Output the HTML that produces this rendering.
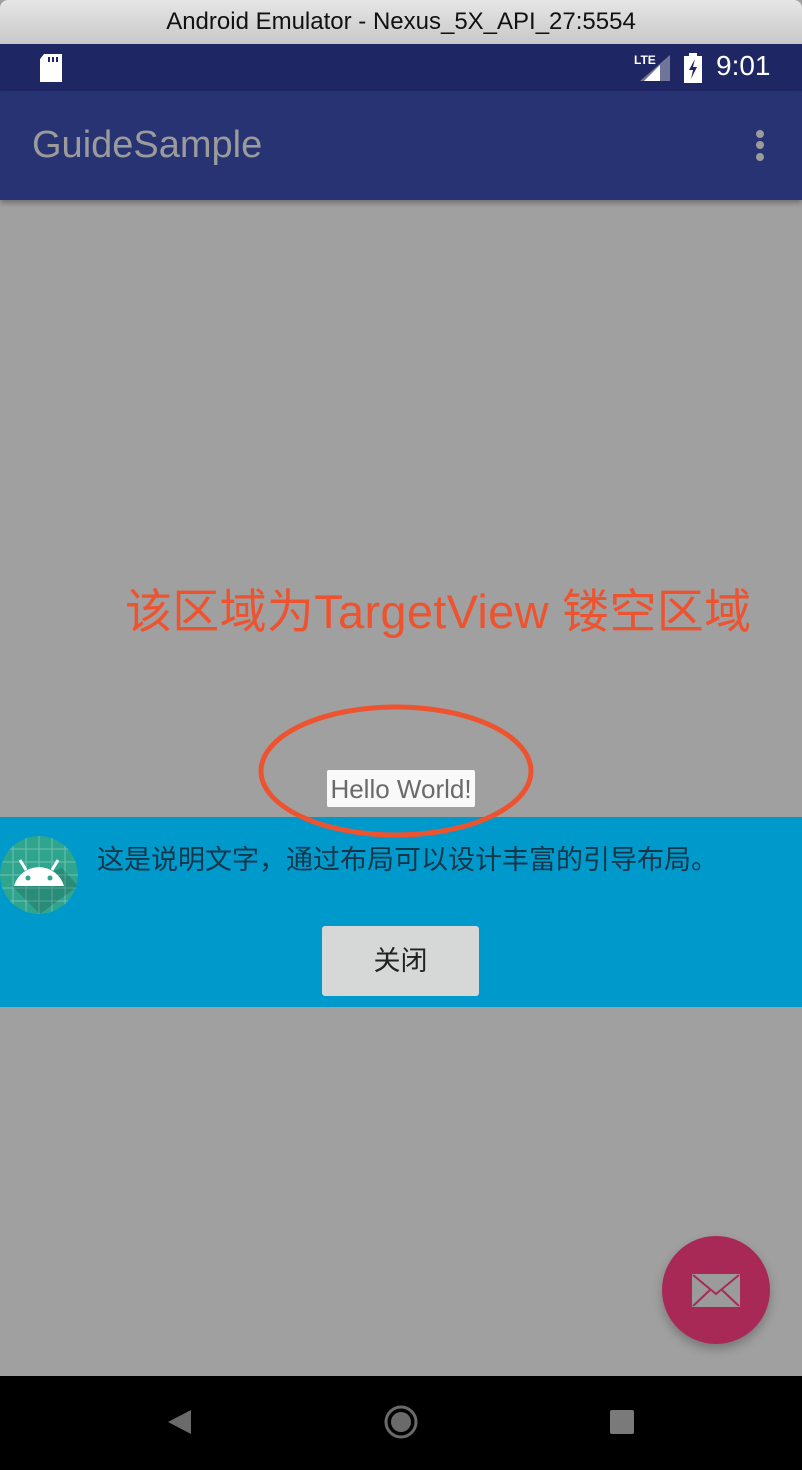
<!DOCTYPE html>
<html><head><meta charset="utf-8"><style>
*{margin:0;padding:0;box-sizing:border-box}
body{width:802px;height:1470px;position:relative;overflow:hidden;background:#a0a0a0;font-family:"Liberation Sans","Noto Sans CJK SC",sans-serif}
.a{position:absolute}
</style></head><body>
<div class="a" style="left:0;top:0;width:802px;height:44px;background:linear-gradient(#e6e6e6,#c8c8c8);border-radius:8px 8px 0 0;text-align:center;font-size:24px;line-height:44px;color:#111">Android Emulator - Nexus_5X_API_27:5554</div>
<div class="a" style="left:0;top:44px;width:802px;height:47px;background:#1e2664"></div>
<svg class="a" style="left:38px;top:54px" width="26" height="28"><path d="M6 0H24V28H2V5Z" fill="#fff"/><rect x="10" y="3" width="2" height="5" fill="#1e2664"/><rect x="14" y="3" width="2" height="5" fill="#1e2664"/><rect x="18" y="3" width="2" height="5" fill="#1e2664"/></svg>
<div class="a" style="left:634px;top:53px;font-size:12px;color:#fff;font-weight:bold">LTE</div>
<svg class="a" style="left:640px;top:55px" width="30" height="26"><path d="M30 0V26H0Z" fill="#6f7699"/><path d="M20 10V26H4Z" fill="#fff"/></svg>
<svg class="a" style="left:684px;top:53px" width="18" height="30"><rect x="5" y="0" width="8" height="3" fill="#fff"/><rect x="0" y="3" width="18" height="27" fill="#fff"/><path d="M11 6L5 17H9L7 26L13 14H9Z" fill="#1e2664"/></svg>
<div class="a" style="left:716px;top:50px;font-size:28px;color:#fff">9:01</div>
<div class="a" style="left:0;top:91px;width:802px;height:109px;background:#283373;box-shadow:0 3px 5px rgba(0,0,0,.3)"></div>
<div class="a" style="left:32px;top:124px;font-size:38px;color:#9b9b9b">GuideSample</div>
<svg class="a" style="left:752px;top:129px" width="16" height="34"><circle cx="8" cy="5" r="4" fill="#9b9b9b"/><circle cx="8" cy="16" r="4" fill="#9b9b9b"/><circle cx="8" cy="28" r="4" fill="#9b9b9b"/></svg>
<div class="a" style="left:125px;top:573px;font-size:47px;color:#ee5330;white-space:nowrap;letter-spacing:0.3px">该区域为TargetView 镂空区域</div>
<div class="a" style="left:0;top:817px;width:802px;height:190px;background:#0099cc"></div>
<div class="a" style="left:327px;top:770px;width:148px;height:37px;background:#f9f9f9;border-radius:2px;font-size:26px;color:#6a6a6a;text-align:center;line-height:38px">Hello World!</div>
<svg class="a" style="left:256px;top:702px" width="280" height="140"><ellipse cx="140" cy="69" rx="135" ry="64" fill="none" stroke="#ee5330" stroke-width="5"/></svg>
<svg class="a" style="left:0;top:836px" width="78" height="78"><defs><clipPath id="c"><circle cx="39" cy="39" r="39"/></clipPath></defs><g clip-path="url(#c)"><circle cx="39" cy="39" r="39" fill="#2fa58e"/><g stroke="#6cc2b1" stroke-width="1"><path d="M0 13H78M0 26H78M0 39H78M0 52H78M0 65H78M13 0V78M26 0V78M39 0V78M52 0V78M65 0V78"/></g><path d="M12 50L40 78L78 50L62 32Z" fill="#000" opacity=".15"/></g><path d="M14 50A26 26 0 0 1 64 50Z" fill="#fff"/><path d="M20 24L26 34M58 24L52 34" stroke="#fff" stroke-width="3"/><circle cx="28" cy="42" r="2.5" fill="#2fa58e"/><circle cx="50" cy="42" r="2.5" fill="#2fa58e"/></svg>
<div class="a" style="left:97px;top:838px;font-size:27px;color:#16374a;white-space:nowrap">这是说明文字，通过布局可以设计丰富的引导布局。</div>
<div class="a" style="left:322px;top:926px;width:157px;height:70px;background:#d6d7d7;border-radius:3px;font-size:27px;color:#222;text-align:center;line-height:70px">关闭</div>
<div class="a" style="left:662px;top:1236px;width:108px;height:108px;border-radius:50%;background:#a82955;box-shadow:0 5px 10px rgba(0,0,0,.25)"></div>
<svg class="a" style="left:692px;top:1274px" width="48" height="34"><rect x="0" y="0" width="48" height="33" fill="#9b9b9b"/><path d="M1 1L24 20L47 1M1 32L18 16M47 32L30 16" stroke="#a82955" stroke-width="2" fill="none"/></svg>
<div class="a" style="left:0;top:1376px;width:802px;height:94px;background:#000"></div>
<svg class="a" style="left:0;top:1376px" width="802" height="94"><path d="M191 34V58L168 46Z" fill="#6a6a6a"/><circle cx="401" cy="46" r="15" fill="none" stroke="#6a6a6a" stroke-width="3"/><circle cx="401" cy="46" r="10" fill="#6a6a6a"/><rect x="610" y="34" width="24" height="24" rx="2" fill="#7a7a7a"/></svg>
</body></html>
